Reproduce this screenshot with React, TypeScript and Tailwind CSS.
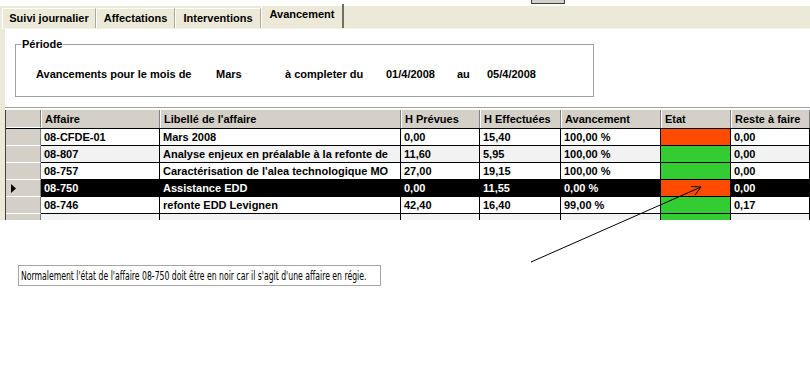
import React from 'react'

// ─── Data ────────────────────────────────────────────────────

interface Row {
  affaire: string
  libelle: string
  prevues: string
  effectuees: string
  avancement: string
  etat: 'orange' | 'green'
  reste: string
}

const ROWS: Row[] = [
  { affaire: '08-CFDE-01', libelle: 'Mars 2008', prevues: '0,00', effectuees: '15,40', avancement: '100,00 %', etat: 'orange', reste: '0,00' },
  { affaire: '08-807', libelle: 'Analyse enjeux en préalable à la refonte de', prevues: '11,60', effectuees: '5,95', avancement: '100,00 %', etat: 'green', reste: '0,00' },
  { affaire: '08-757', libelle: "Caractérisation de l'alea technologique MO", prevues: '27,00', effectuees: '19,15', avancement: '100,00 %', etat: 'green', reste: '0,00' },
  { affaire: '08-750', libelle: 'Assistance EDD', prevues: '0,00', effectuees: '11,55', avancement: '0,00 %', etat: 'orange', reste: '0,00' },
  { affaire: '08-746', libelle: 'refonte EDD Levignen', prevues: '42,40', effectuees: '16,40', avancement: '99,00 %', etat: 'green', reste: '0,17' },
  { affaire: '', libelle: '', prevues: '', effectuees: '', avancement: '', etat: 'green', reste: '' },
]

const SELECTED = 3

const HEADERS = ['Affaire', "Libellé de l'affaire", 'H Prévues', 'H Effectuées', 'Avancement', 'Etat', 'Reste à faire']

const TABS = [
  { label: 'Suivi journalier', w: 'w-[94px]' },
  { label: 'Affectations', w: 'w-[79px]' },
  { label: 'Interventions', w: 'w-[86px]' },
]

const COLS = 'grid grid-cols-[35px_119px_241px_79px_81px_100px_70px_79px]'

// ─── Component ───────────────────────────────────────────────

export default function App() {
  return (
    <div className="relative w-[810px] h-[384px] overflow-hidden bg-white text-black font-['Liberation_Sans',Arial,sans-serif] text-[11px] font-bold">
      {/* sliver of a button cut by the top edge */}
      <div className="h-[6px] flex">
        <div className="ml-[531px] w-[34px] h-[4px] border-x border-b border-[#404040] bg-[#D4D0C8]" />
      </div>

      {/* Tabs */}
      <div className="h-[22px] bg-[#ECE9D8] flex items-end pl-[2px]">
        {TABS.map((t) => (
          <div
            key={t.label}
            className={`${t.w} h-[20px] flex items-center justify-center border-l border-t border-white border-r border-r-[#ACA899] leading-none`}
          >
            {t.label}
          </div>
        ))}
        <div className="w-[83px] h-[24px] flex items-start justify-center pt-[5px] border-l border-white border-r-2 border-r-[#716F64] leading-none">
          Avancement
        </div>
      </div>

      {/* Body */}
      <div className="flex h-[192px] border-t border-[#F4F3EE]">
        <div className="w-[5px] bg-[#ECE9D8]" />
        <div className="flex-1 flex flex-col overflow-hidden">
          {/* Période */}
          <fieldset className="ml-[10px] mt-[10px] w-[579px] h-[58px] border border-[#A0A0A0]">
            <legend className="ml-[5px] px-[1px] leading-[11px]">Période</legend>
            <div className="flex ml-[20px] mt-[18px] leading-[13px]">
              <span className="w-[180px]">Avancements pour le mois de</span>
              <span className="w-[69px]">Mars</span>
              <span className="w-[101px]">à completer du</span>
              <span className="w-[71px]">01/4/2008</span>
              <span className="w-[30px]">au</span>
              <span>05/4/2008</span>
            </div>
          </fieldset>

          {/* Grid */}
          <div className="mt-[10px] border-t border-[#A0A0A0] pt-[2px] flex-1 overflow-hidden">
            <div className="border-l border-[#404040] h-full">
              <div className={`${COLS} h-[19px] bg-[#D4D0C8] border-b border-black`}>
                <div className="border-r border-[#808080] border-b border-b-white" />
                {HEADERS.map((h) => (
                  <div
                    key={h}
                    className="border-l border-white border-r border-r-[#808080] pl-[3px] flex items-center whitespace-nowrap overflow-hidden"
                  >
                    {h}
                  </div>
                ))}
              </div>
              {ROWS.map((r, i) => {
                const sel = i === SELECTED
                const bg = sel ? 'bg-black text-white' : i % 2 === 0 ? 'bg-white' : 'bg-[#F2F2F2]'
                const cell = 'border-r border-b border-black pl-[3px] flex items-center whitespace-nowrap overflow-hidden'
                return (
                  <div key={i} className={`${COLS} h-[17px] ${bg}`}>
                    <div className="bg-[#D4D0C8] border-r border-[#808080] border-b border-b-white flex items-center pl-[5px]">
                      {sel && (
                        <svg width="5" height="9" viewBox="0 0 5 9">
                          <path d="M0 0 L5 4.5 L0 9 Z" fill="#000" />
                        </svg>
                      )}
                    </div>
                    <div className={cell}>{r.affaire}</div>
                    <div className={cell}>{r.libelle}</div>
                    <div className={cell}>{r.prevues}</div>
                    <div className={cell}>{r.effectuees}</div>
                    <div className={cell}>{r.avancement}</div>
                    <div className={`${cell} ${r.etat === 'orange' ? 'bg-[#FF4B00]' : 'bg-[#33CC33]'}`} />
                    <div className={cell}>{r.reste}</div>
                  </div>
                )
              })}
            </div>
          </div>
        </div>
      </div>

      {/* Annotation */}
      <div className="mt-[45px] ml-[18px] w-[363px] h-[21px] border border-[#A6A6A6] flex items-center pl-[2px] overflow-hidden">
        <span className="inline-block origin-left scale-x-[0.66] whitespace-nowrap font-normal text-[13px] leading-none font-['Liberation_Sans_Narrow','DejaVu_Sans_Condensed',sans-serif]">
          Normalement l'état de l'affaire 08-750 doit être en noir car il s'agit d'une affaire en régie.
        </span>
      </div>

      {/* Arrow from the note to the Etat cell */}
      <svg className="absolute left-0 top-0 pointer-events-none" width="810" height="384">
        <line x1="531" y1="262" x2="701" y2="187" stroke="#000" strokeWidth="1" />
        <line x1="701" y1="187" x2="691" y2="186.5" stroke="#000" strokeWidth="1" />
        <line x1="701" y1="187" x2="695" y2="195" stroke="#000" strokeWidth="1" />
      </svg>
    </div>
  )
}
